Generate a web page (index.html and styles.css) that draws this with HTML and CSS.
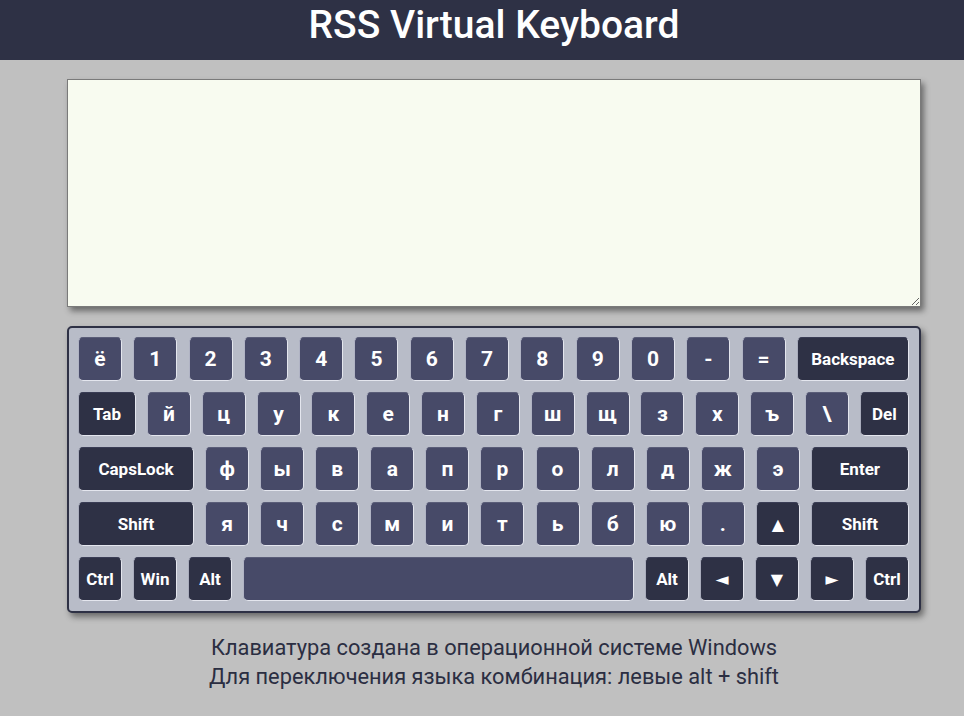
FILE: index.html
```html
<!DOCTYPE html>
<html lang="ru">
<head>
<meta charset="utf-8">
<title>RSS Virtual Keyboard</title>
<link rel="stylesheet" href="styles.css">
</head>
<body>
<header class="header"><h1 class="title">RSS Virtual Keyboard</h1></header>
<main class="main">
  <textarea class="display"></textarea>
  <div class="keyboard">
    <div class="row">
      <div class="key">ё</div><div class="key">1</div><div class="key">2</div><div class="key">3</div><div class="key">4</div><div class="key">5</div><div class="key">6</div><div class="key">7</div><div class="key">8</div><div class="key">9</div><div class="key">0</div><div class="key">-</div><div class="key">=</div><div class="key special w112">Backspace</div>
    </div>
    <div class="row">
      <div class="key special w58">Tab</div><div class="key">й</div><div class="key">ц</div><div class="key">у</div><div class="key">к</div><div class="key">е</div><div class="key">н</div><div class="key">г</div><div class="key">ш</div><div class="key">щ</div><div class="key">з</div><div class="key">х</div><div class="key">ъ</div><div class="key">\</div><div class="key special w49">Del</div>
    </div>
    <div class="row">
      <div class="key special w116">CapsLock</div><div class="key">ф</div><div class="key">ы</div><div class="key">в</div><div class="key">а</div><div class="key">п</div><div class="key">р</div><div class="key">о</div><div class="key">л</div><div class="key">д</div><div class="key">ж</div><div class="key">э</div><div class="key special w98">Enter</div>
    </div>
    <div class="row">
      <div class="key special w116">Shift</div><div class="key">я</div><div class="key">ч</div><div class="key">с</div><div class="key">м</div><div class="key">и</div><div class="key">т</div><div class="key">ь</div><div class="key">б</div><div class="key">ю</div><div class="key">.</div><div class="key special arrow">▲</div><div class="key special w98">Shift</div>
    </div>
    <div class="row">
      <div class="key special">Ctrl</div><div class="key special">Win</div><div class="key special">Alt</div><div class="key space"></div><div class="key special">Alt</div><div class="key special arrow arrow-side">◄</div><div class="key special arrow">▼</div><div class="key special arrow arrow-side">►</div><div class="key special">Ctrl</div>
    </div>
  </div>
  <div class="info">
    <p class="info-line">Клавиатура создана в операционной системе Windows</p>
    <p class="info-line">Для переключения языка комбинация: левые alt + shift</p>
  </div>
</main>
</body>
</html>
```
FILE: styles.css
```css
* { box-sizing: border-box; }
html, body { margin: 0; padding: 0; }
body {
  background: #c0c0c0;
  font-family: Roboto, "Noto Sans", sans-serif;
  width: 964px;
  height: 716px;
  overflow: hidden;
}
.header {
  height: 60px;
  background: #2e3145;
  padding-left: 24px;
  display: flex;
  align-items: center;
  justify-content: center;
}
.title {
  margin: 0;
  color: #ffffff;
  font-size: 39px;
  font-weight: 500;
  line-height: 1;
  padding-bottom: 10px;
}
.main {
  display: flex;
  flex-direction: column;
  align-items: center;
  padding-left: 24px;
  padding-top: 19px;
}
.display {
  display: block;
  width: 854px;
  height: 228px;
  margin: 0;
  background: #f8fbf0;
  border: 1px solid #7a7a7a;
  box-shadow: 3px 4px 6px rgba(0, 0, 0, 0.45);
  resize: both;
  outline: none;
}
.keyboard {
  margin-top: 19px;
  width: 854px;
  height: 287px;
  background: #b8bcc8;
  border: 2px solid #2e3145;
  border-radius: 5px;
  box-shadow: 3px 4px 6px rgba(0, 0, 0, 0.45);
  padding: 9px 10px 10px 9px;
  display: flex;
  flex-direction: column;
  gap: 11px;
}
.row {
  display: flex;
  justify-content: space-between;
  height: 44px;
}
.key {
  width: 44px;
  height: 44px;
  flex: none;
  background: #474a68;
  color: #ffffff;
  border-radius: 5px;
  border: 1px solid #e4e6ee;
  border-top-color: #5a5d78;
  border-left-color: #b0b3c4;
  display: flex;
  align-items: center;
  justify-content: center;
  font-size: 21px;
  font-weight: 700;
}
.special {
  background: #2e3145;
  font-size: 17px;
  border-top-color: #3a3d55;
  border-left-color: #a9acbc;
}
.arrow { font-size: 16px; font-family: "DejaVu Sans", sans-serif; }
.arrow-side { font-size: 17px; }
.w112 { width: 112px; }
.w58 { width: 58px; }
.w49 { width: 49px; }
.w116 { width: 116px; }
.w98 { width: 98px; }
.space { width: 391px; }
.info {
  margin-top: 20px;
  text-align: center;
  color: #2b2e42;
}
.info-line {
  margin: 0;
  font-size: 21.8px;
  line-height: 29px;
}
```
